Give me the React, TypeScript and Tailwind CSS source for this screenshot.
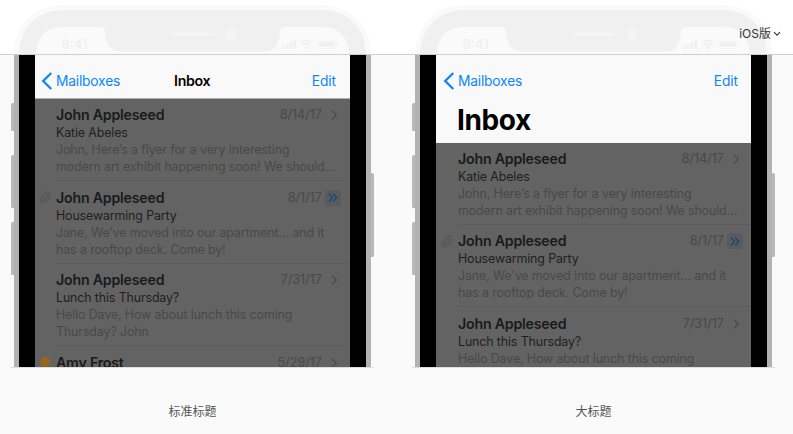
import React from "react";

type Mail = {
  name: string;
  date: string;
  subject: string;
  lines: string[];
  kind?: "vip" | "flag";
};

const mails: Mail[] = [
  {
    name: "John Appleseed",
    date: "8/14/17",
    subject: "Katie Abeles",
    lines: ["John, Here’s a flyer for a very interesting", "modern art exhibit happening soon! We should…"],
  },
  {
    name: "John Appleseed",
    date: "8/1/17",
    subject: "Housewarming Party",
    lines: ["Jane, We’ve moved into our apartment… and it", "has a rooftop deck. Come by!"],
    kind: "vip",
  },
  {
    name: "John Appleseed",
    date: "7/31/17",
    subject: "Lunch this Thursday?",
    lines: ["Hello Dave, How about lunch this coming", "Thursday? John"],
  },
  { name: "Amy Frost", date: "5/29/17", subject: "", lines: [], kind: "flag" },
];

function PhoneTop() {
  return (
    <svg width="357" height="54" viewBox="14 0 357 54" className="block">
      <path d="M14 54C15 24 34 5 66 5H319C351 5 370 24 371 54Z" fill="#fafafa" />
      <path
        fillRule="evenodd"
        fill="#f0f0f0"
        d="M19 54C20 28 36 10 65 10H320C349 10 365 28 366 54H349C348 38 340 27 322 27H285C281 27 280 29 280 33C279 44 274 51.7 264 51.7H121C111 51.7 106 44 105 33C105 29 104 27 100 27H63C45 27 37 38 36 54Z"
      />
      <rect x="171.500" y="32.500" width="43" height="3.500" rx="1.700" fill="#f4f4f4" />
      <circle cx="231" cy="34" r="6" fill="#f4f4f4" />
      <text x="61.500" y="49" fontFamily="Inter, sans-serif" fontWeight="600" fontSize="12.500" textLength="26" fill="#f0f0f0">9:41</text>
      <g fill="#f0f0f0">
        <rect x="281.500" y="45.500" width="2.700" height="3.500" rx=".6" />
        <rect x="285.500" y="44" width="2.700" height="5" rx=".6" />
        <rect x="289.500" y="42" width="2.700" height="7" rx=".6" />
        <rect x="293.500" y="40" width="2.700" height="9" rx=".6" />
        <rect x="319" y="41.500" width="16" height="5.500" rx="1" />
        <path d="M337 42.500q1.500 1.700 0 3.400z" />
        <path d="M306.800 49.200l-2.200-2.300q2.200-1.600 4.400 0z" />
      </g>
      <g fill="none" stroke="#f0f0f0">
        <rect x="317.500" y="40" width="19" height="8.500" rx="2" strokeWidth="0.600" />
        <path d="M300.700 43q6.100-4.800 12.200 0M302.800 45.300q4-3.200 8 0" strokeWidth="1.800" />
      </g>
    </svg>
  );
}

function Disclosure() {
  return (
    <svg width="7" height="10" viewBox="0 0 7 10" fill="none" stroke="#4a4a4a" strokeWidth="1.200">
      <path d="M1 .7L5.300 5L1 9.300" />
    </svg>
  );
}

function Row({ mail }: { mail: Mail }) {
  return (
    <div className="flex h-[82.500px] shrink-0">
      <div className="flex w-[21px] shrink-0 justify-center pt-[10px]">
        {mail.kind === "vip" && (
          <svg width="13" height="13" viewBox="0 0 24 24" fill="none" stroke="#505050" strokeWidth="1.700" strokeLinecap="round" className="-ml-px">
            <path d="M21.400 11.100L12.300 20.200A6 6 0 0 1 3.800 11.700L12.400 3.200A4 4 0 1 1 18 8.800L9.400 17.300A2 2 0 0 1 6.600 14.500L15.100 6.100" />
          </svg>
        )}
        {mail.kind === "flag" && <div className="mt-[0.500px] -ml-px size-2.5 rounded-full bg-[#99641f]" />}
      </div>
      <div className="min-w-0 flex-1 border-b border-[#5d5d5d] pt-[7.500px]">
        <div className="flex h-[18px] items-center">
          <span className="flex-1 text-[14.200px] leading-[18px] font-semibold tracking-[-0.220px] text-[#1a1a1a]">{mail.name}</span>
          <span className="text-[12.600px] leading-[18px] text-[#494949]">{mail.date}</span>
          <span className="flex w-[28px] shrink-0 pl-[3px]">
            {mail.kind === "vip" ? (
              <span className="flex size-4 items-center justify-center rounded-[3px] bg-[#5b5b5d]">
                <svg width="10" height="9" viewBox="0 0 10 9" fill="none" stroke="#154b7c" strokeWidth="1.500">
                  <path d="M.8.6L4.500 4.500L.8 8.400M5 .6L8.700 4.500L5 8.400" />
                </svg>
              </span>
            ) : (
              <span className="pl-[6px]">
                <Disclosure />
              </span>
            )}
          </span>
        </div>
        <div className="text-[12.400px] leading-[17px] tracking-[-0.120px] whitespace-nowrap text-[#1f1f1f]">{mail.subject}</div>
        {mail.lines.map((line) => (
          <div key={line} className="text-[12.400px] leading-[17px] tracking-[-0.100px] whitespace-nowrap text-[#494949]">{line}</div>
        ))}
      </div>
    </div>
  );
}

function SideButtons() {
  return (
    <div className="flex w-[3px] flex-col pt-[47.500px]">
      <div className="h-[28.500px] rounded-l-[1.500px] bg-[#b9b9b9]" />
      <div className="mt-[23.500px] h-[53px] rounded-l-[1.500px] bg-[#b9b9b9]" />
      <div className="mt-[14px] h-[53px] rounded-l-[1.500px] bg-[#b9b9b9]" />
    </div>
  );
}

function Phone({ large, caption }: { large?: boolean; caption: string }) {
  return (
    <figure className="w-[363px]">
      <div className="flex h-[313px] overflow-hidden border-b border-[#dedede]">
        <SideButtons />
        <div className="w-[5px] bg-[#b2b2b2]" />
        <div className="w-4 bg-black" />
        <div className="flex w-[315px] flex-col overflow-hidden bg-[#636363]">
          <div className={large ? "h-[88px] shrink-0 bg-[#f9f9f9] pl-px" : "h-[44px] shrink-0 border-b border-[#b0b0b0] bg-[#f9f9f9]"}>
            <div className="flex h-[43px] items-center pt-[9px]">
              <div className="flex w-[139px] items-center text-[13.800px] tracking-[-0.200px] text-[#0a87fb]">
                <svg width="12" height="18" viewBox="0 0 12 18" fill="none" stroke="currentColor" strokeWidth="2.300" className="ml-1.5">
                  <path d="M10.300 1L2.200 9L10.300 17" />
                </svg>
                <span className="ml-[3px]">Mailboxes</span>
              </div>
              <div className="flex-1 text-[14.200px] font-semibold tracking-[-0.300px] text-black">{large ? "" : "Inbox"}</div>
              <div
                className={
                  large
                    ? "pr-[13px] text-[13.800px] tracking-[-0.100px] text-[#0a87fb]"
                    : "pr-[14px] text-[13.800px] tracking-[-0.100px] text-[#0a87fb]"
                }
              >
                Edit
              </div>
            </div>
            {large && <h2 className="pl-5 text-[28px] leading-[44px] font-bold tracking-[-0.400px] text-black">Inbox</h2>}
          </div>
          <div className={large ? "-mt-[0.700px] -mr-px flex flex-col pl-px" : "-mt-[0.500px] flex flex-col"}>
            {mails.map((mail, i) => (
              <Row key={i} mail={mail} />
            ))}
          </div>
        </div>
        <div className="w-4 bg-black" />
        <div className="w-[5px] bg-[#b2b2b2]" />
        <div className="w-[3px] pt-[117.500px]">
          <div className="h-[84px] rounded-r-[1.500px] bg-[#b9b9b9]" />
        </div>
      </div>
      <figcaption className="mt-[35px] text-center text-[12px] leading-[18px] text-[#555]">{caption}</figcaption>
    </figure>
  );
}

export default function App() {
  return (
    <div className="h-[434px] w-[793px] overflow-hidden bg-[#fafafa] font-['Inter','Noto_Sans_CJK_SC',sans-serif]">
      <header className="relative flex h-[55px] items-start border-b border-[#cfcfcf] bg-white pl-[14px]">
        <PhoneTop />
        <div className="ml-11">
          <PhoneTop />
        </div>
        <button className="absolute top-[25px] right-3 flex items-center gap-[2px] text-[12px] leading-[18px] text-[#333]">
          iOS版
          <svg width="8" height="6" viewBox="0 0 8 6" fill="none" stroke="currentColor" strokeWidth="1.100">
            <path d="M1 1.200L4 4.200L7 1.200" />
          </svg>
        </button>
      </header>
      <main className="flex gap-[38px] pl-[11px]">
        <Phone caption="标准标题" />
        <Phone large caption="大标题" />
      </main>
    </div>
  );
}
